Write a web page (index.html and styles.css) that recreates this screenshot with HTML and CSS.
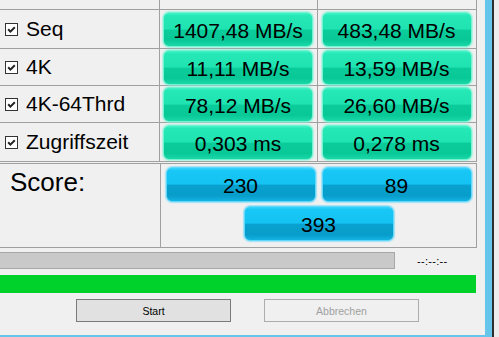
FILE: index.html
```html
<!DOCTYPE html>
<html lang="de">
<head>
  <meta charset="UTF-8">
  <meta name="viewport" content="width=device-width, initial-scale=1.0">
  <title>AS SSD Benchmark</title>
  <link rel="stylesheet" href="styles.css">
</head>
<body>

<div class="screen">
  <div class="window">
    <div class="client">

      <div class="results">
        <div class="cell head"></div>
        <div class="cell head"></div>
        <div class="cell head"></div>

        <div class="cell label">
          <svg class="check" width="13" height="13" viewBox="0 0 13 13"><rect x="0.5" y="0.5" width="12" height="12" fill="#fff" stroke="#333"/><path d="M3.2 6.3 L5.4 8.6 L9.8 4.2" fill="none" stroke="#222" stroke-width="2"/></svg>
          Seq
        </div>
        <div class="cell"><div class="val">1407,48 MB/s</div></div>
        <div class="cell"><div class="val">483,48 MB/s</div></div>

        <div class="cell label">
          <svg class="check" width="13" height="13" viewBox="0 0 13 13"><rect x="0.5" y="0.5" width="12" height="12" fill="#fff" stroke="#333"/><path d="M3.2 6.3 L5.4 8.6 L9.8 4.2" fill="none" stroke="#222" stroke-width="2"/></svg>
          4K
        </div>
        <div class="cell"><div class="val">11,11 MB/s</div></div>
        <div class="cell"><div class="val">13,59 MB/s</div></div>

        <div class="cell label">
          <svg class="check" width="13" height="13" viewBox="0 0 13 13"><rect x="0.5" y="0.5" width="12" height="12" fill="#fff" stroke="#333"/><path d="M3.2 6.3 L5.4 8.6 L9.8 4.2" fill="none" stroke="#222" stroke-width="2"/></svg>
          4K-64Thrd
        </div>
        <div class="cell"><div class="val">78,12 MB/s</div></div>
        <div class="cell"><div class="val">26,60 MB/s</div></div>

        <div class="cell label">
          <svg class="check" width="13" height="13" viewBox="0 0 13 13"><rect x="0.5" y="0.5" width="12" height="12" fill="#fff" stroke="#333"/><path d="M3.2 6.3 L5.4 8.6 L9.8 4.2" fill="none" stroke="#222" stroke-width="2"/></svg>
          Zugriffszeit
        </div>
        <div class="cell"><div class="val">0,303 ms</div></div>
        <div class="cell"><div class="val">0,278 ms</div></div>
      </div>

      <div class="score">
        <div class="score-label">Score:</div>
        <div class="score-vals">
          <div class="score-pair">
            <div class="sval">230</div>
            <div class="sval">89</div>
          </div>
          <div class="sval">393</div>
        </div>
      </div>

      <div class="progress-row">
        <div class="progress"></div>
        <span class="time">--:--:--</span>
      </div>

      <div class="done-bar"></div>

      <div class="buttons">
        <button class="btn">Start</button>
        <button class="btn" disabled>Abbrechen</button>
      </div>

    </div>
  </div>
  <div class="edge"></div>
</div>

</body>
</html>
```

FILE: styles.css
```css
:root {
  --bg-color: #f0f0f0;
  --line-color: #a0a0a0;
  --frame-color: #66c5ea;
  --bar-green: #00d22b;
}
body {
  margin: 0;
  background-color: #ececec;
  font-family: 'Liberation Sans', Arial, sans-serif;
  color: #000;
  overflow: hidden;
}
.screen {
  display: flex;
  height: 337px;
}
.window {
  width: 485px;
  height: 335px;
  border-right: 7px solid var(--frame-color);
  border-bottom: 7px solid var(--frame-color);
  background-color: var(--bg-color);
  flex-shrink: 0;
}
.edge {
  width: 2px;
  background-color: #2e2e2e;
}
.client {
  display: flex;
  flex-direction: column;
  height: 100%;
}

/* result table */
.results {
  display: grid;
  grid-template-columns: 160px 158px 159px;
  grid-template-rows: 10px 39px 37px 37px 39px;
}
.cell {
  box-sizing: border-box;
  border-right: 1px solid var(--line-color);
  border-bottom: 1px solid var(--line-color);
  display: flex;
  align-items: center;
  justify-content: center;
}
.cell.label {
  justify-content: flex-start;
  padding-left: 5px;
  font-size: 21px;
}
.check {
  margin-right: 8px;
  flex-shrink: 0;
}
.val {
  box-sizing: border-box;
  width: 150px;
  height: 35px;
  padding-top: 3px;
  margin-left: -1px;
  display: flex;
  align-items: center;
  justify-content: center;
  font-size: 21px;
  border: 1px solid #74f2d2;
  border-radius: 6px;
  background: linear-gradient(to bottom, #45f3c8 0, #26e8b7 8%, #1fe3b1 48%, #0acc9a 53%, #09c897 82%, #1ad8a8 100%);
  box-shadow: 0 0 1px 1px rgba(130, 245, 215, 0.6);
}

/* score */
.score {
  box-sizing: border-box;
  width: 477px;
  margin-top: 1px;
  display: grid;
  grid-template-columns: 161px 1fr;
  border-top: 1px solid var(--line-color);
  border-right: 1px solid var(--line-color);
  border-bottom: 1px solid var(--line-color);
  height: 85px;
}
.score-label {
  border-right: 1px solid var(--line-color);
  font-size: 26px;
  line-height: 30px;
  padding: 3px 0 0 10px;
}
.score-vals {
  display: flex;
  flex-direction: column;
  align-items: center;
  gap: 4px;
  padding-top: 3px;
}
.score-pair {
  display: flex;
  gap: 6px;
}
.sval {
  box-sizing: border-box;
  width: 150px;
  height: 35px;
  padding-top: 3px;
  display: flex;
  align-items: center;
  justify-content: center;
  font-size: 21px;
  border: 1px solid #5fd8fa;
  border-radius: 6px;
  background: linear-gradient(to bottom, #3ad3fa 0, #18c7f5 8%, #14c3f2 48%, #09a1cf 53%, #089dcb 84%, #13b3e2 100%);
  box-shadow: 0 0 1px 1px rgba(110, 215, 250, 0.6);
}

/* progress */
.progress-row {
  display: flex;
  align-items: center;
  margin-top: 4px;
  height: 17px;
}
.progress {
  box-sizing: border-box;
  width: 396px;
  height: 17px;
  margin-left: -1px;
  border: 1px solid #a8a8a8;
  background-color: #c9c9c9;
}
.time {
  margin-left: 22px;
  font-size: 11px;
  letter-spacing: 0.3px;
}
.done-bar {
  width: 476px;
  height: 18px;
  margin-top: 6px;
  background-color: var(--bar-green);
}

/* buttons */
.buttons {
  display: flex;
  gap: 33px;
  padding-left: 76px;
  margin-top: 6px;
}
.btn {
  box-sizing: border-box;
  width: 155px;
  height: 23px;
  border: 1px solid #7a7a7a;
  background-color: #e1e1e1;
  font-family: 'Liberation Sans', Arial, sans-serif;
  font-size: 10.5px;
  color: #000;
  padding: 0;
}
.btn:disabled {
  border-color: #adadad;
  background-color: #f0f0f0;
  color: #a0a0a0;
}
```
